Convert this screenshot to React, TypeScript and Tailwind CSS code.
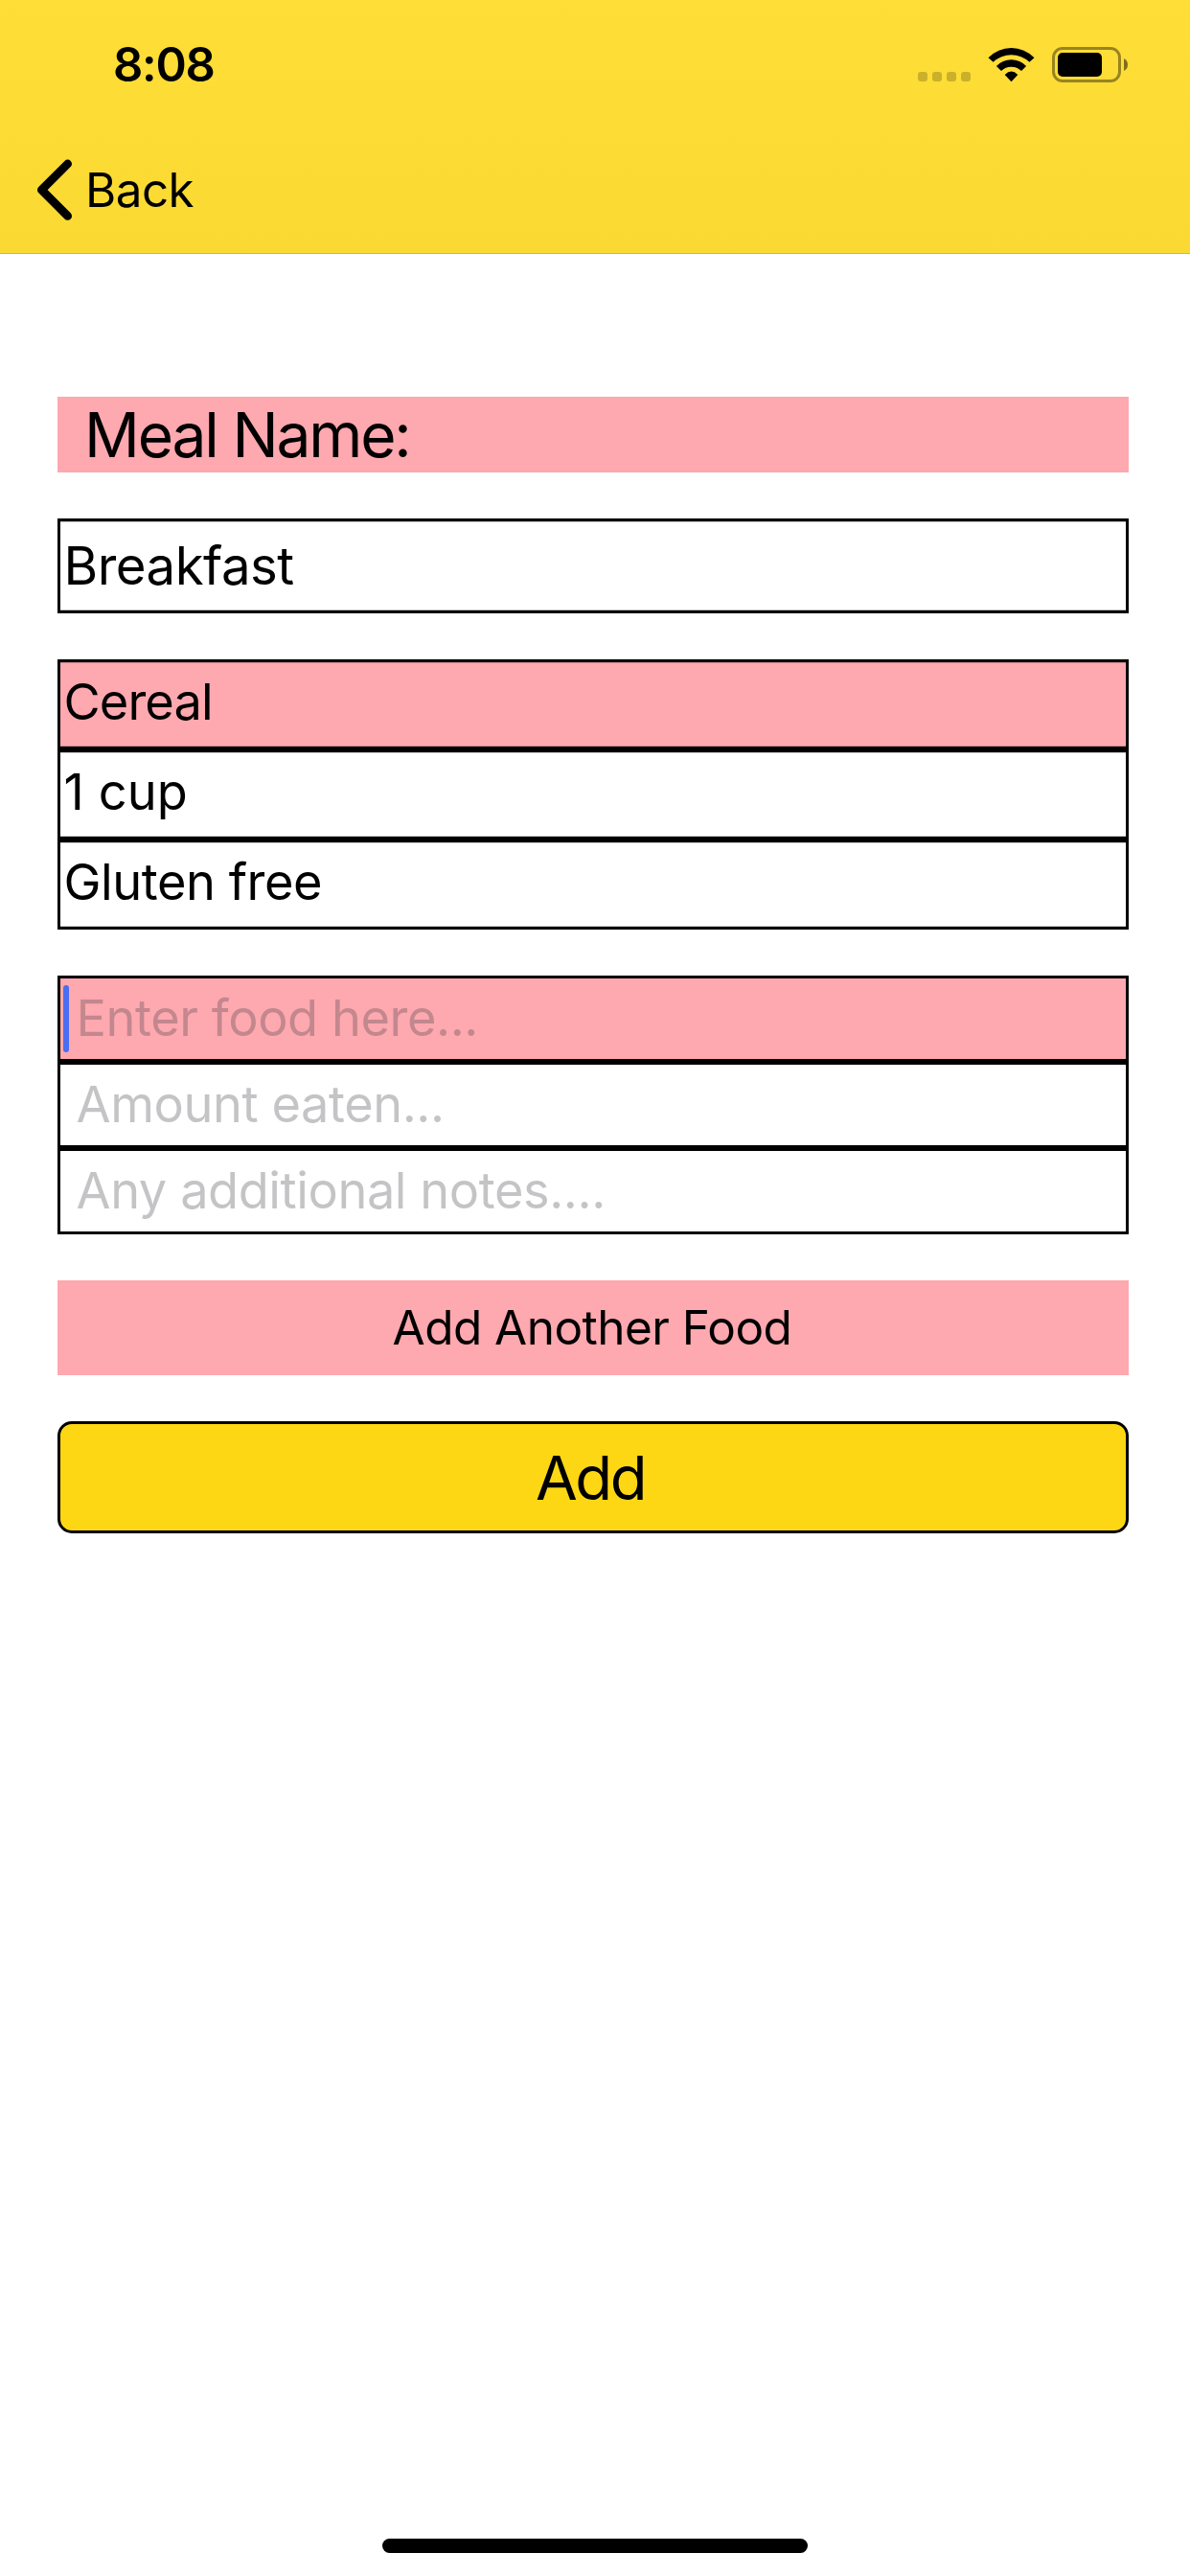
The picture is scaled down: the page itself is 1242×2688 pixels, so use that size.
import React from "react";
import clsx from "clsx";

function Wifi() {
  return (
    <svg className="ml-[18px] h-[37px] w-[49px]" viewBox="0 0 49 37">
      <path d="M.5 11.2A33.5 33.5 0 0 1 48.5 11.2L43.4 15.7A27.5 27.5 0 0 0 5.6 15.7Z" />
      <path d="M8.9 20A21.5 21.5 0 0 1 40.1 20L35 25A15 15 0 0 0 14 25Z" />
      <path d="M17.7 29Q24.5 22.2 31.3 29L24.5 36.2Z" />
    </svg>
  );
}

function Battery() {
  return (
    <svg className="ml-[18px] h-[37px] w-[80px]" viewBox="0 0 80 37">
      <rect x="1.5" y="1.5" width="69" height="34" rx="9.5" fill="none" stroke="#000" strokeOpacity=".4" strokeWidth="3" />
      <rect x="6" y="6" width="46" height="25" rx="5" />
      <path d="M75 12Q79 14 79 18.5T75 25Z" fillOpacity=".5" />
    </svg>
  );
}

function StatusBar() {
  return (
    <div className="flex h-[132px] items-start justify-between pr-16 pl-[118px]">
      <span className="mt-[38px] text-[49px] leading-[60px] font-semibold tracking-[-1.3px]">8:08</span>
      <div className="mt-[49px] flex">
        <div className="mt-[26px] flex gap-[5px]">
          {[0, 1, 2, 3].map((i) => (
            <span key={i} className="size-[10px] rounded-[3px] bg-black/20" />
          ))}
        </div>
        <Wifi />
        <Battery />
      </div>
    </div>
  );
}

function Header() {
  return (
    <header className="h-[265px] border-b border-[#b2b2ac] bg-linear-to-b from-[#ffde37] to-[#fad932]">
      <StatusBar />
      <button className="flex h-[132px] items-center pl-[38px]">
        <svg className="h-[64px] w-[38px]" viewBox="0 0 38 64" fill="none" stroke="#000" strokeWidth="8.8" strokeLinecap="round" strokeLinejoin="round">
          <path d="M32.6 5L5.4 32.2L32.6 59.4" />
        </svg>
        <span className="ml-[13px] text-[49.3px] leading-[60px] tracking-[-0.5px]">Back</span>
      </button>
    </header>
  );
}

function SavedRow({ text, className }: { text: string; className?: string }) {
  return (
    <div
      className={clsx(
        "flex h-[94px] items-center border-[3px] pb-[6px] pl-[3.5px] text-[52.3px] shadow-[inset_0_1px_rgba(0,0,0,.2),inset_0_-1px_rgba(0,0,0,.2)]",
        className,
      )}
    >
      {text}
    </div>
  );
}

function EntryRow({ hint, className, focused }: { hint: string; className?: string; focused?: boolean }) {
  return (
    <div className={clsx("flex h-[90px] items-center border-[3px] pl-[3px] text-[52.3px]", className)}>
      <span className={clsx("h-[70px] w-[6px] rounded-[3px]", focused && "bg-[#4a6df2]")} />
      <span className="ml-[7.5px] pb-[2px] tracking-[-0.42px] text-[#3c3c43]/30">{hint}</span>
    </div>
  );
}

export default function App() {
  return (
    <div className="flex h-[2688px] w-[1242px] flex-col bg-white font-['Inter',sans-serif] leading-none whitespace-nowrap text-black">
      <Header />
      <main className="mt-[149px] ml-[60px] flex w-[1118px] flex-col gap-12 *:border-black">
        <h1 className="flex h-[79px] items-center bg-[#fea8af] pl-[28px] text-[64px] tracking-[-2.15px]">Meal Name:</h1>
        <div className="flex h-[99px] items-center border-[3px] pl-[3.5px] text-[54.5px] tracking-[-0.5px] shadow-[inset_0_1px_rgba(0,0,0,.25),inset_0_-1px_rgba(0,0,0,.25)]">
          Breakfast
        </div>
        <section>
          <SavedRow text="Cereal" className="bg-[#fea8af] tracking-[-0.9px]" />
          <SavedRow text="1 cup" className="tracking-[0.1px]" />
          <SavedRow text="Gluten free" className="tracking-[-0.45px]" />
        </section>
        <section>
          <EntryRow hint="Enter food here..." className="bg-[#fea8af]" focused />
          <EntryRow hint="Amount eaten..." />
          <EntryRow hint="Any additional notes...." />
        </section>
        <button className="flex h-[99px] items-center justify-center bg-[#fea8af] pr-[2px] text-[49.5px] tracking-[-0.55px]">
          Add Another Food
        </button>
        <button className="flex h-[117px] items-center justify-center rounded-[15px] border-[3px] bg-[#fed714] pr-[6px] text-[63.5px] tracking-[-2.5px]">
          Add
        </button>
      </main>
      <div className="mx-auto mt-auto mb-[24px] h-[15px] w-[444px] rounded-full bg-black" />
    </div>
  );
}
